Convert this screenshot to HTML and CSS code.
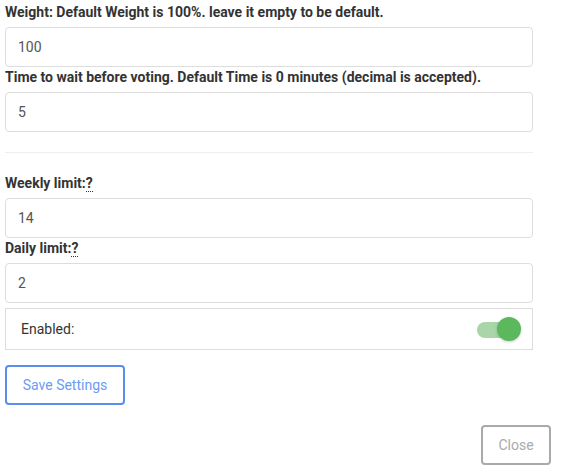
FILE: index.html
```html
<!DOCTYPE html>
<html>
<head>
<meta charset="utf-8">
<link rel="stylesheet" href="styles.css">
</head>
<body>
<div class="panel">
  <div class="field">
    <label class="lbl">Weight: Default Weight is 100%. leave it empty to be default.</label>
    <input class="inp" type="text" value="100">
  </div>
  <div class="field">
    <label class="lbl">Time to wait before voting. Default Time is 0 minutes (decimal is accepted).</label>
    <input class="inp" type="text" value="5">
  </div>
  <hr class="sep">
  <div class="field">
    <label class="lbl">Weekly limit:<abbr class="q" title="Weekly limit">?</abbr></label>
    <input class="inp" type="text" value="14">
  </div>
  <div class="field">
    <label class="lbl">Daily limit:<abbr class="q" title="Daily limit">?</abbr></label>
    <input class="inp" type="text" value="2">
  </div>
  <div class="toggle-row">
    <span class="toggle-label">Enabled:</span>
    <span class="switch"><span class="track"></span><span class="knob"></span></span>
  </div>
  <div class="actions">
    <button class="btn-save">Save Settings</button>
  </div>
  <div class="footer">
    <button class="btn-close">Close</button>
  </div>
</div>
</body>
</html>
```
FILE: styles.css
```css
html, body {
  margin: 0;
  padding: 0;
  background: #fff;
}
body {
  font-family: Roboto, "Liberation Sans", sans-serif;
  color: #333;
}
.panel {
  padding: 3px 10px 0 5px;
  width: 528px;
  box-sizing: content-box;
}
.field {
  display: flex;
  flex-direction: column;
}
.lbl {
  font-size: 14px;
  font-weight: bold;
  line-height: 18px;
  color: #333;
  margin-bottom: 6px;
}
.q {
  text-decoration: none;
  border-bottom: 1px dotted #333;
  cursor: help;
}
.inp {
  height: 40px;
  box-sizing: border-box;
  border: 1px solid #ddd;
  border-radius: 4px;
  padding: 0 12px;
  font-family: Roboto, "Liberation Sans", sans-serif;
  font-size: 14px;
  color: #555;
  width: 528px;
  margin: 0 0 1px 0;
  outline: none;
}
.sep {
  border: 0;
  border-top: 1px solid #eee;
  margin: 19px 0 21px 0;
  height: 0;
}
.toggle-row {
  margin-top: 4px;
  height: 42px;
  box-sizing: border-box;
  border: 1px solid #ddd;
  display: flex;
  align-items: center;
  justify-content: space-between;
  padding: 0 11px 0 15px;
}
.toggle-label {
  font-size: 14px;
  color: #333;
}
.switch {
  position: relative;
  width: 44px;
  height: 24px;
  display: block;
}
.track {
  position: absolute;
  left: 0;
  top: 5px;
  width: 36px;
  height: 16px;
  border-radius: 8px;
  background: #a9d5a9;
}
.knob {
  position: absolute;
  right: 0;
  top: 0;
  width: 24px;
  height: 24px;
  border-radius: 50%;
  background: #5cb85c;
  box-shadow: 0 1px 3px rgba(0,0,0,0.2);
}
.actions {
  margin-top: 15px;
}
.btn-save {
  height: 40px;
  width: 120px;
  border: 2px solid #5b8def;
  border-radius: 4px;
  background: #fff;
  color: #6c9bf5;
  font-family: Roboto, "Liberation Sans", sans-serif;
  font-size: 14px;
  padding: 0;
}
.footer {
  display: flex;
  justify-content: flex-end;
  margin-top: 20px;
  margin-right: -18px;
}
.btn-close {
  height: 40px;
  width: 70px;
  border: 2px solid #aaa;
  border-radius: 4px;
  background: #fff;
  color: #aaa;
  font-family: Roboto, "Liberation Sans", sans-serif;
  font-size: 14px;
  padding: 0;
}
```
